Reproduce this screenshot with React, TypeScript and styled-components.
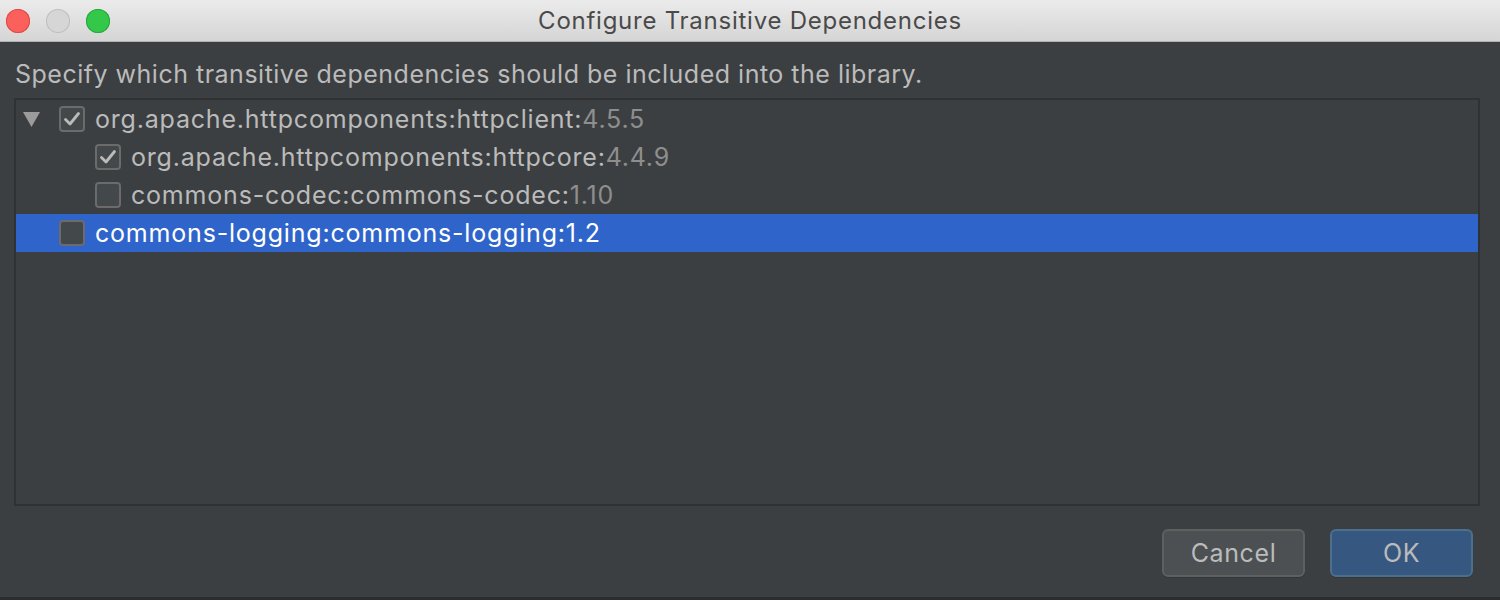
import * as React from 'react';
import styled, { createGlobalStyle } from 'styled-components';

const GlobalStyle = createGlobalStyle`
  html, body {
    margin: 0;
    padding: 0;
    background: #3c3f41;
  }
  body {
    font-family: Inter, "Liberation Sans", Arial, sans-serif;
  }
`;

const Window = styled.div`
  width: 1500px;
  height: 600px;
  display: flex;
  flex-direction: column;
  background: #3c3f41;
  border-bottom: 3px solid #2a2c2d;
  box-sizing: border-box;
  overflow: hidden;
`;

const TitleBar = styled.div`
  height: 41px;
  flex: none;
  display: flex;
  align-items: center;
  position: relative;
  background: linear-gradient(#ebebeb, #d5d5d5);
  border-bottom: 1px solid #b1b1b1;
`;

const Lights = styled.div`
  display: flex;
  gap: 16px;
  padding-left: 6px;
`;

const Light = styled.span<{ $color: string; $border: string }>`
  width: 24px;
  height: 24px;
  border-radius: 50%;
  background: ${({ $color }) => $color};
  box-shadow: inset 0 0 0 1px ${({ $border }) => $border};
`;

const Title = styled.div`
  position: absolute;
  left: 0;
  right: 0;
  text-align: center;
  font-size: 24px;
  letter-spacing: 0.75px;
  color: #4a4a4a;
  pointer-events: none;
`;

const Body = styled.div`
  flex: 1;
  display: flex;
  flex-direction: column;
`;

const Hint = styled.div`
  height: 56px;
  flex: none;
  display: flex;
  align-items: center;
  padding: 8px 0 0 15px;
  box-sizing: border-box;
  font-size: 25px;
  letter-spacing: 0.5px;
  color: #bbbbbb;
`;

const TreePanel = styled.div`
  height: 408px;
  margin: 0 20px 0 14px;
  border: 2px solid #2f3132;
  box-sizing: border-box;
  display: flex;
  flex-direction: column;
`;

const Row = styled.div<{ $selected?: boolean }>`
  height: 38px;
  display: flex;
  align-items: center;
  background: ${({ $selected }) => ($selected ? '#2f65ca' : 'transparent')};
  color: ${({ $selected }) => ($selected ? '#ffffff' : '#bbbbbb')};
  font-size: 25px;
  letter-spacing: 0.8px;
`;

const Toggle = styled.span`
  width: 43px;
  flex: none;
  display: flex;
  align-items: center;
  padding-left: 7px;
  box-sizing: border-box;
`;

const Indent = styled.span<{ $level: number }>`
  width: ${({ $level }) => $level * 36}px;
  flex: none;
`;

const Box = styled.span`
  width: 26px;
  height: 26px;
  flex: none;
  box-sizing: border-box;
  border: 2px solid #6b6b6b;
  border-radius: 4px;
  background: #43494a;
  display: flex;
  align-items: center;
  justify-content: center;
  margin-right: 10px;
`;

const Version = styled.span<{ $selected?: boolean }>`
  color: ${({ $selected }) => ($selected ? '#ffffff' : '#8e8e8e')};
`;

const Footer = styled.div`
  flex: 1;
  display: flex;
  justify-content: flex-end;
  align-items: center;
  gap: 25px;
  padding: 2px 27px 0 0;
`;

const Button = styled.button<{ $primary?: boolean }>`
  width: 143px;
  height: 48px;
  border-radius: 6px;
  font-family: inherit;
  font-size: 25px;
  letter-spacing: 0.6px;
  color: #bbbbbb;
  background: ${({ $primary }) => ($primary ? '#365880' : '#4c5052')};
  border: 2px solid ${({ $primary }) => ($primary ? '#4c708c' : '#5e6060')};
  box-shadow: 0 1px 0 rgba(0, 0, 0, 0.15);
`;

const Check = () => (
  <svg width="18" height="16" viewBox="0 0 18 16">
    <path d="M2.5 8.5 L7 13 L15.5 2.5" fill="none" stroke="#bbbbbb" strokeWidth="2.8" strokeLinecap="round" strokeLinejoin="round" />
  </svg>
);

const Triangle = () => (
  <svg width="17" height="15" viewBox="0 0 17 15">
    <path d="M0 0 H17 L8.5 15 Z" fill="#9b9b9b" />
  </svg>
);

interface Dep {
  name: string;
  version: string;
  level: number;
  checked: boolean;
  expandable?: boolean;
  selected?: boolean;
}

const deps: Dep[] = [
  { name: 'org.apache.httpcomponents:httpclient', version: '4.5.5', level: 0, checked: true, expandable: true },
  { name: 'org.apache.httpcomponents:httpcore', version: '4.4.9', level: 1, checked: true },
  { name: 'commons-codec:commons-codec', version: '1.10', level: 1, checked: false },
  { name: 'commons-logging:commons-logging', version: '1.2', level: 0, checked: false, selected: true },
];

const App = () => (
  <Window>
    <GlobalStyle />
    <TitleBar>
      <Lights>
        <Light $color="#fc605c" $border="#de4a43" />
        <Light $color="#d6d6d6" $border="#bfbfbf" />
        <Light $color="#34c84a" $border="#28a63a" />
      </Lights>
      <Title>Configure Transitive Dependencies</Title>
    </TitleBar>
    <Body>
      <Hint>Specify which transitive dependencies should be included into the library.</Hint>
      <TreePanel>
        {deps.map((d) => (
          <Row key={d.name} $selected={d.selected}>
            <Toggle>{d.expandable && <Triangle />}</Toggle>
            <Indent $level={d.level} />
            <Box>{d.checked && <Check />}</Box>
            <span>
              {d.name}:<Version $selected={d.selected}>{d.version}</Version>
            </span>
          </Row>
        ))}
      </TreePanel>
      <Footer>
        <Button>Cancel</Button>
        <Button $primary>OK</Button>
      </Footer>
    </Body>
  </Window>
);

export default App;
